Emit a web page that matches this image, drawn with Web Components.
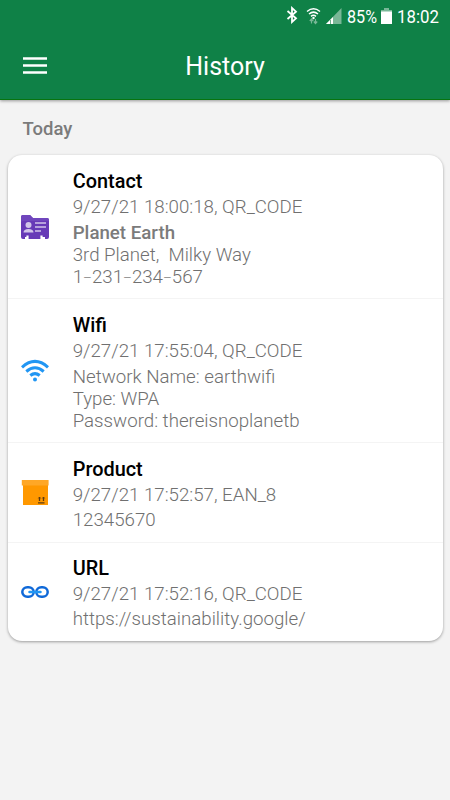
<!DOCTYPE html>
<html lang="en">
<head>
<meta charset="utf-8">
<title>History</title>
<style>
html,body{margin:0;height:100%;background:#f3f3f3;font-family:Roboto,"Liberation Sans",sans-serif;overflow:hidden}
</style>
</head>
<body>
<history-app></history-app>
<script>
const define=(name,html)=>customElements.define(name,class extends HTMLElement{
  constructor(){super();this.attachShadow({mode:'open'}).innerHTML=html;}
});

define('status-bar',`<style>
:host{display:flex;height:32px;align-items:center;color:#fff;font-size:19px;line-height:32px;white-space:nowrap}
svg{display:block;flex:none}
.bt{margin-left:285px;margin-top:-2px}.wf{margin-left:6px;margin-top:-1px}.sg{margin-left:4px}
.pct{margin-left:5px;width:31px}.bat{margin-left:3px}.time{margin-left:4.500px;width:42px}
.pct,.time{padding-top:1px}
span span{display:block;transform-origin:0 50%;width:max-content}
.pct span{transform:scaleX(.85)}.time span{transform:scaleX(.885)}
</style>
<svg class="bt" width="14" height="18" viewBox="0 0 14 18"><path d="M2.5 5 11 12.3 7 16V2l4 3.7L2.5 13" fill="none" stroke="#fff" stroke-width="1.8"/></svg>
<svg class="wf" width="17" height="18" viewBox="0 0 17 18"><g fill="none" stroke="#fff" stroke-width="1.5"><path d="M2 4.5Q8.500 -.8 15 4.500M4 7Q8.500 3.200 13 7M6 9.300Q8.500 7.300 11 9.300"/></g><circle cx="8.500" cy="11" r="1.200" fill="#fff"/><path d="M6.500 16.500v-4M4.800 14l1.700-2 1.700 2M10.500 12v4M8.800 14.500l1.700 2 1.700-2" fill="none" stroke="#79b797" stroke-width="1.200"/></svg>
<svg class="sg" width="16" height="16" viewBox="0 0 16 16"><path d="M0 16 15.500 0v16z" fill="#79b797"/><path d="M0 16 7 9v7z" fill="#fff"/><path d="M4.500 12v4" stroke="#4d9b70" stroke-width=".8"/></svg>
<span class="pct"><span>85%</span></span>
<svg class="bat" width="11" height="16" viewBox="0 0 11 16"><path d="M3 0h5v2h3v2H0V2h3z" fill="#79b797"/><path d="M0 3.500h11V16H0z" fill="#fff"/></svg>
<span class="time"><span>18:02</span></span>`);

define('app-header',`<style>
:host{display:flex;flex-direction:column;height:99px;background:#0f8147;border-bottom:1px solid #07740f;box-shadow:0 1px 3px rgba(0,0,0,.38)}
.bar{display:grid;grid-template-columns:100px 1fr 100px;align-items:center;height:67px}
svg{display:block;margin-left:23px;margin-top:-1px}
h1{margin:3px 0 0;text-align:center;color:#fff;font-weight:400;font-size:25px;line-height:30px}
</style>
<status-bar></status-bar>
<div class="bar"><svg width="24" height="17" viewBox="0 0 24 17"><path d="M0 1.500h24M0 8.500h24M0 15.500h24" stroke="#fff" stroke-width="2.500"/></svg><h1><slot></slot></h1></div>`);

define('history-card',`<style>
:host{display:block;margin:0 7.500px 0 7.500px;background:#fff;border-radius:14px;box-shadow:0 1px 3px rgba(0,0,0,.36);overflow:hidden}
</style><slot></slot>`);

define('history-entry',`<style>
:host{display:grid;grid-template-columns:65.200px 1fr;box-sizing:border-box;height:99.500px;border-bottom:1px solid #f4f4f4}
:host([tall]){height:144px}
:host(:last-child){border-bottom:0;height:98.500px}
.icon{display:flex;align-items:center;padding-left:13.500px}
.text{padding-top:14.500px;color:#707070;font-weight:300;font-size:18.700px;line-height:22px;white-space:pre}
.title{color:#000;font-weight:500;font-size:19.900px;line-height:24px}
.date{margin-top:2.500px}.detail{margin-top:3.300px}
:host([tall]) .detail{margin-top:4px}
:host(:last-child) .date{margin-top:1.800px}
</style>
<div class="icon"><slot name="icon"></slot></div>
<div class="text"><div class="title"><slot name="title"></slot></div><div class="date"><slot name="date"></slot></div><div class="detail"><slot></slot></div></div>`);

define('entry-line',`<style>:host{display:block}:host([strong]){font-weight:500;color:#7b7b7b}</style><slot></slot>`);

define('phone-number',`<style>::slotted(i){font-style:normal;font-size:13.600px;line-height:0;vertical-align:1.500px}</style><slot></slot>`);

const icons={
contact:`<path d="M0 4q0-2 2-2h7l3 3h14q2 0 2 2v17q0 2-2 2h-2v-2h-3v2H7v-2H4v2H2q-2 0-2-2z" fill="#673ab7"/><path d="M0 9V4q0-2 2-2h7l3 3h14q2 0 2 2v1H2z" fill="#7046bd"/><circle cx="7.500" cy="12" r="3" fill="#d1c4e9"/><path d="M2.500 19.500q0-3.500 5-3.500t5 3.500z" fill="#d1c4e9"/><path d="M14 10h11M14 14h11M14 18h6" stroke="#d1c4e9" stroke-width="1.300"/><path d="M6.500 22.500v3.500M20.500 22.500v3.500" stroke="#fff" stroke-width="2.200"/>`,
wifi:`<g fill="none" stroke="#2196f3" stroke-width="3"><path d="M1 10.300Q14 -1.500 27 10.300M5.300 14.500Q14 7 22.700 14.500M9.300 18.500Q14 14.700 18.700 18.500"/></g><circle cx="14" cy="22.500" r="2" fill="#2196f3"/>`,
product:`<path d="M2 6h25v21H2z" fill="#ff9800"/><path d="M.8 2h26.800v5.500H.8z" fill="#ffa726"/><path d="M18.500 19v4M22.500 19v4M17 24.800h6.500" stroke="#5d3b12" stroke-width="1.300"/><path d="M17.300 20.500l1.200-1.500 1.200 1.500M21.300 20.500l1.200-1.500 1.200 1.500" fill="none" stroke="#5d3b12" stroke-width=".7"/>`,
url:`<g fill="none" stroke="#1069d8" stroke-width="2.500"><rect x="1.300" y="9.200" width="11.400" height="9.600" rx="5"/><rect x="15.300" y="9.200" width="11.400" height="9.600" rx="5"/></g><path d="M8.500 14h11" stroke="#2196f3" stroke-width="2.500" stroke-linecap="round"/>`};
customElements.define('entry-icon',class extends HTMLElement{
  connectedCallback(){
    const root=this.shadowRoot||this.attachShadow({mode:'open'});
    root.innerHTML=`<style>:host,svg{display:block}</style><svg width="28" height="28" viewBox="0 0 28 28">${icons[this.getAttribute('kind')]}</svg>`;
  }
});

define('history-app',`<style>
:host{display:flex;flex-direction:column;height:800px}
h2{margin:15px 0 11px 22.500px;height:29px;line-height:28px;font-size:18.500px;font-weight:500;color:#7b7b7b}
span{display:block}
</style>
<app-header>History</app-header>
<h2>Today</h2>
<history-card>
<history-entry tall><entry-icon slot="icon" kind="contact"></entry-icon><span slot="title">Contact</span><span slot="date">9/27/21 18:00:18, QR_CODE</span><entry-line strong>Planet Earth</entry-line><entry-line>3rd Planet,  Milky Way</entry-line><entry-line><phone-number>1<i>–</i>231<i>–</i>234<i>–</i>567</phone-number></entry-line></history-entry>
<history-entry tall><entry-icon slot="icon" kind="wifi"></entry-icon><span slot="title">Wifi</span><span slot="date">9/27/21 17:55:04, QR_CODE</span><entry-line>Network Name: earthwifi</entry-line><entry-line>Type: WPA</entry-line><entry-line>Password: thereisnoplanetb</entry-line></history-entry>
<history-entry><entry-icon slot="icon" kind="product"></entry-icon><span slot="title">Product</span><span slot="date">9/27/21 17:52:57, EAN_8</span><entry-line>12345670</entry-line></history-entry>
<history-entry><entry-icon slot="icon" kind="url"></entry-icon><span slot="title">URL</span><span slot="date">9/27/21 17:52:16, QR_CODE</span><entry-line>https://sustainability.google/</entry-line></history-entry>
</history-card>`);
</script>
</body>
</html>
